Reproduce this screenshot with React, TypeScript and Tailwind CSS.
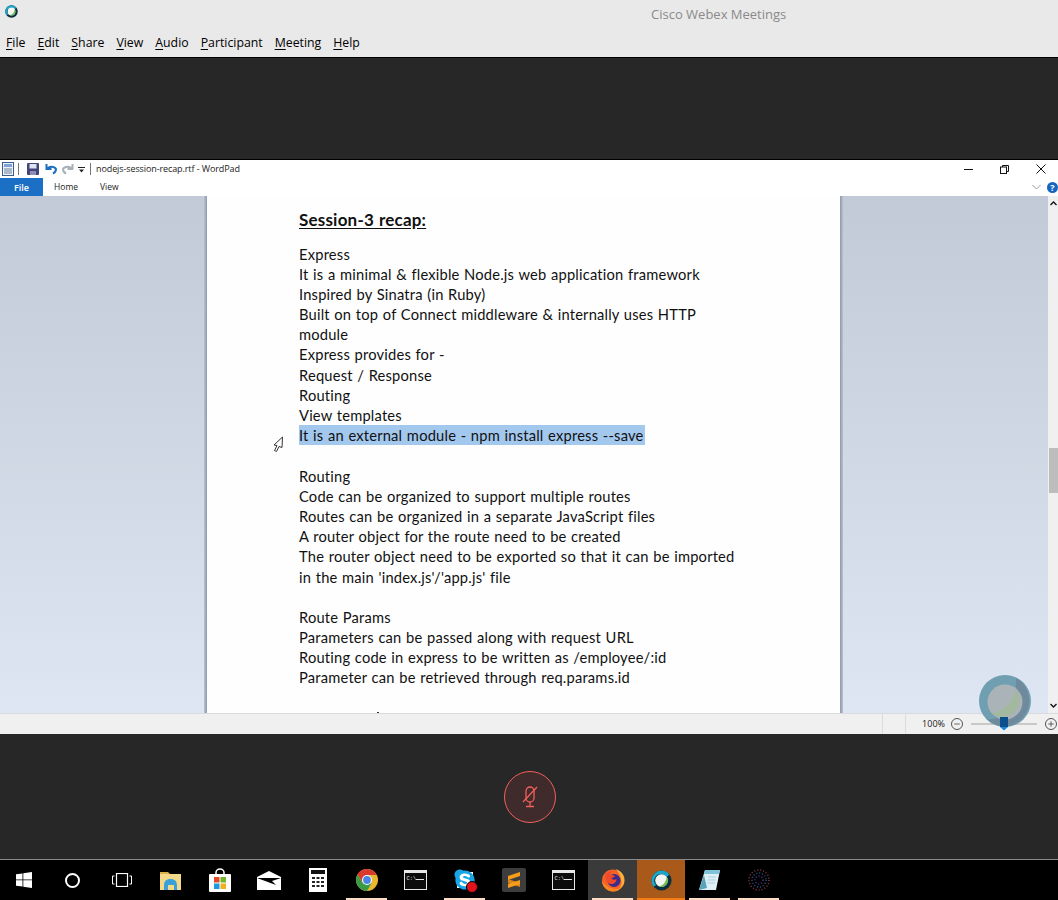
import { Minus, Plus } from "lucide-react";
import { FaSkype } from "react-icons/fa";
import { type ReactNode } from "react";

const menus = ["File", "Edit", "Share", "View", "Audio", "Participant", "Meeting", "Help"];

const docLines = [
  "Express",
  "It is a minimal & flexible Node.js web application framework",
  "Inspired by Sinatra (in Ruby)",
  "Built on top of Connect middleware & internally uses HTTP",
  "module",
  "Express provides for -",
  "Request / Response",
  "Routing",
  "View templates",
  "#It is an external module - npm install express --save",
  "",
  "Routing",
  "Code can be organized to support multiple routes",
  "Routes can be organized in a separate JavaScript files",
  "A router object for the route need to be created",
  "The router object need to be exported so that it can be imported",
  "in the main 'index.js'/'app.js' file",
  "",
  "Route Params",
  "Parameters can be passed along with request URL",
  "Routing code in express to be written as /employee/:id",
  "Parameter can be retrieved through req.params.id",
];

function WebexLogo({ size }: { size: number }) {
  return (
    <svg width={size} height={size} viewBox="0 0 24 24">
      <circle cx="12" cy="12" r="11.5" fill="#0b2f3c" />
      <path d="M12 .5A11.5 11.5 0 0 0 .5 12c0 3 1 5 2.5 7l3-2a7 7 0 0 1 6-12 7 7 0 0 1 6 3l3-3A11.5 11.5 0 0 0 12 .5z" fill="#19a6c9" />
      <circle cx="12" cy="12" r="7.2" fill="#f4f6f4" />
      <path d="M18 8a7.2 7.2 0 0 1-9 10.5C14 18 17 14 18 8z" fill="#6fbf4a" />
    </svg>
  );
}

function CmdIcon() {
  return (
    <svg width="23" height="20" viewBox="0 0 23 20">
      <rect x="0.5" y="0.5" width="22" height="19" fill="#0c0c0c" stroke="#e8e8e8" />
      <rect x="0" y="0" width="23" height="3" fill="#e8e8e8" />
      <text x="2.5" y="10" fontSize="5.5" fontFamily="Liberation Mono, monospace" fill="#e8e8e8">
        C:\
      </text>
      <rect x="12" y="9" width="8" height="1" fill="#e8e8e8" />
    </svg>
  );
}

function ChromeIcon() {
  return (
    <svg width="22" height="22" viewBox="0 0 22 22">
      <circle cx="11" cy="11" r="11" fill="#e8b92e" />
      <path d="M11 0a11 11 0 0 0-9.5 5.5L6 13l5-7h9.5A11 11 0 0 0 11 0z" fill="#d9392f" />
      <path d="M1.5 5.5A11 11 0 0 0 11 22l4.5-7.8L6 13z" fill="#3a9a48" />
      <circle cx="11" cy="11" r="5" fill="#fff" />
      <circle cx="11" cy="11" r="3.9" fill="#4a84e8" />
    </svg>
  );
}

function FirefoxIcon() {
  return (
    <svg width="24" height="24" viewBox="0 0 24 24">
      <circle cx="12" cy="12.5" r="11" fill="#f2622a" />
      <path d="M15 1c6 2.5 9 7 8.5 12-.5 5-4 8.500-8.500 9.500 4-2 6-5 5.500-9C20 9 18 5 15 1z" fill="#fbb03b" />
      <circle cx="13" cy="12.500" r="6.500" fill="#3c2a8c" />
      <path d="M4 7c2-3 5-4 8-4-2 1-3 2-3 4 2-.5 4 0 5 1.500-1 1-3 1-3.500 2 1 1.500 3.500 1.500 5 .5 0 3-2.500 5.500-6 5-3-.5-5-3-5-5.500C4 9.500 4 8 4 7z" fill="#ef4b2b" />
      <path d="M1 13c.5 6 5.500 10.500 11 10.500 4 0 7-2 9-5-3 2.500-7 3-10.500 1.500C6 18.500 3 16 1 13z" fill="#f7881f" />
    </svg>
  );
}

function SkypeIcon() {
  return (
    <div className="relative flex h-[24px] w-[24px] items-center justify-center">
      <span className="absolute h-4 w-4 bg-white" />
      <FaSkype size={24} color="#18a6e4" className="relative" />
      <span className="absolute left-[13px] top-[13px] h-3 w-3 rounded-full border border-black bg-[#e3121b]" />
    </div>
  );
}

function TaskIcon({
  children,
  running,
  className,
}: {
  children: ReactNode;
  running?: boolean;
  className?: string;
}) {
  return (
    <div className={`relative flex h-full shrink-0 items-center justify-center ${className ?? "w-[49px]"}`}>
      {children}
      {running && <span className="absolute bottom-0 left-1 right-1 h-0.5 bg-[#ffdcc4]" />}
    </div>
  );
}

function MuteIcon() {
  return (
    <svg width="16" height="22" viewBox="0 0 16 22" fill="none" stroke="#f0605a" strokeWidth="1.300">
      <rect x="4" y="1" width="8" height="15" rx="4" />
      <path d="M8 16v4M4 20.500h8M1 16 15 1" />
    </svg>
  );
}

export default function App() {
  return (
    <div className="relative flex h-[900px] w-[1058px] flex-col overflow-hidden bg-[#272727] [font-family:'Open_Sans',sans-serif]">
      <div className="h-[57px] shrink-0 bg-[#e9e9e9]">
        <div className="relative flex h-[32px] items-start pl-[5px] pt-[5px]">
          <WebexLogo size={13} />
          <span className="absolute left-[651px] top-[5px] text-[13px] leading-[18px] text-[#8a8a8a]">Cisco Webex Meetings</span>
        </div>
        <div className="flex h-[25px] items-start gap-[12px] pl-[6px] pt-[2px] text-[12.3px] leading-[18px] text-black">
          {menus.map((m) => (
            <span key={m}>
              <span className="underline underline-offset-2">{m[0]}</span>
              {m.slice(1)}
            </span>
          ))}
        </div>
      </div>
      <div className="h-[103px] shrink-0 border-y border-black bg-[#272727]" />

      <div className="flex h-[574px] shrink-0 flex-col bg-white">
        <div className="flex h-[18px] shrink-0 items-center pl-[2px] text-[9px] tracking-[-0.1px] text-[#222]">
          <svg width="12" height="14" viewBox="0 0 12 14">
            <rect x="0.500" y="0.500" width="11" height="13" fill="#eef3fa" stroke="#3c5a8a" />
            <rect x="2" y="2" width="8" height="3" fill="#7ea3d4" />
            <path d="M2 7h8M2 9h8M2 11h8" stroke="#6b7f9c" />
          </svg>
          <span className="ml-[4px] mr-[8px] h-3 w-px bg-[#777]" />
          <svg width="12" height="12" viewBox="0 0 12 12">
            <rect x="0" y="0" width="12" height="12" rx="1" fill="#44447a" />
            <rect x="2.500" y="1" width="7" height="4.500" fill="#dfe3ee" />
            <rect x="3" y="8" width="6" height="4" fill="#8e8eb5" />
          </svg>
          <svg className="ml-[6px]" width="13" height="12" viewBox="0 0 13 12" fill="none" stroke="#1f6fc0" strokeWidth="2">
            <path d="M2 6a5 4 0 0 1 9 0c0 2-1 3.500-3 4.500M1.500 1v5h5" />
          </svg>
          <svg className="ml-[3px]" width="13" height="12" viewBox="0 0 13 12" fill="none" stroke="#a9b0ba" strokeWidth="2">
            <path d="M11 6a5 4 0 0 0-9 0c0 2 1 3.500 3 4.500M11.500 1v5h-5" />
          </svg>
          <svg className="ml-[4px]" width="7" height="7" viewBox="0 0 7 7">
            <path d="M0 1h7v1H0zM1 3.500h5L3.500 6.500z" fill="#222" />
          </svg>
          <span className="ml-[5px] h-3 w-px bg-[#777]" />
          <span className="ml-[5px]">nodejs-session-recap.rtf - WordPad</span>
          <div className="ml-auto flex items-center">
            <svg width="9" height="9" viewBox="0 0 9 9" className="mr-[27px]">
              <path d="M0 4.500h9" stroke="#111" />
            </svg>
            <svg width="9" height="9" viewBox="0 0 9 9" fill="none" stroke="#111" className="mr-[27px]">
              <rect x="0.500" y="2" width="6" height="6.500" fill="#fff" />
              <path d="M2.500 2V.500h6V6.500H6.500" />
            </svg>
            <svg width="10" height="10" viewBox="0 0 10 10" stroke="#111" className="mr-[12px]">
              <path d="M.5.500l9 9M9.500.500l-9 9" />
            </svg>
          </div>
        </div>
        <div className="flex h-[18px] shrink-0 items-center text-[8.5px] leading-none text-[#222]">
          <div className="flex h-full w-[43px] items-center justify-center bg-[#1b6fc4] text-[9px] font-semibold text-white">File</div>
          <span className="ml-[11px]">Home</span>
          <span className="ml-[22px]">View</span>
          <svg className="ml-auto mr-[6px]" width="9" height="6" viewBox="0 0 9 6" fill="none" stroke="#9a9a9a">
            <path d="M.5 1l4 4 4-4" />
          </svg>
          <div className="flex h-[11px] w-[11px] items-center justify-center rounded-full bg-[#1565c0] text-[9px] font-bold text-white">?</div>
        </div>

        <div className="relative flex min-h-0 flex-1">
          <div className="w-[204px] shrink-0 bg-gradient-to-b from-[#c3cad7] to-[#dde6f2]" />
          <div className="w-[3px] shrink-0 bg-gradient-to-r from-[#b9c1d1] to-[#8f98ac]" />
          <div className="w-[633px] shrink-0 overflow-hidden bg-[#fefefe] pl-[92px] pt-[13.5px] text-[14.7px] leading-[20.2px] tracking-[0.2px] text-[#111] [font-family:Lato,sans-serif] [word-spacing:0.6px]">
            <div className="mb-[14px] text-[17px] font-bold leading-[20px] underline underline-offset-2">Session-3 recap:</div>
            {docLines.map((line, i) =>
              line.startsWith("#") ? (
                <div key={i} className="h-[20.2px] w-fit bg-[#a3c8ee] pr-px">{line.slice(1)}</div>
              ) : (
                <div key={i} className="h-[20.2px] whitespace-pre">{line}</div>
              ),
            )}
            <div className="ml-[78px] mt-[24px] h-px w-[2px] bg-[#333]" />
          </div>
          <div className="w-[3px] shrink-0 bg-gradient-to-r from-[#8f98ac] to-[#b9c1d1]" />
          <div className="flex-1 bg-gradient-to-b from-[#c3cad7] to-[#dde6f2]" />
          <div className="flex w-[10px] shrink-0 flex-col items-center justify-between bg-[#f0f0f0]">
            <svg width="7" height="5" viewBox="0 0 7 5" fill="none" stroke="#111" strokeWidth="1.300" className="mt-[5px]">
              <path d="M.5 4l3-3 3 3" />
            </svg>
            <svg width="7" height="5" viewBox="0 0 7 5" fill="none" stroke="#111" strokeWidth="1.300" className="mb-[5px]">
              <path d="M.5 1l3 3 3-3" />
            </svg>
          </div>
          <div className="absolute right-0 top-[252px] h-[45px] w-[9px] bg-[#bdbdbd]" />
          <svg className="absolute left-[272px] top-[240px]" width="12" height="17" viewBox="0 0 12 17" fill="#fff" stroke="#333">
            <path d="M10.500 1 2 9l3 .5-2.500 5 2 1 2.500-5 3 1z" />
          </svg>
        </div>

        <div className="relative flex h-[21px] shrink-0 items-center justify-end border-t border-[#dadada] bg-[#f0f0f0] text-[9px] text-[#222]">
          <span className="absolute right-[175px] top-0 h-full w-px bg-[#dcdcdc]" />
          <span className="absolute right-[152px] top-0 h-full w-px bg-[#dcdcdc]" />
          <span className="mr-[6px]">100%</span>
          <div className="flex h-3 w-3 items-center justify-center rounded-full border border-[#555]">
            <Minus size={8} strokeWidth={2} />
          </div>
          <div className="relative mx-[8px] h-[2px] w-[66px] bg-[#c9c9c9]" />
          <div className="mr-[1px] flex h-3 w-3 items-center justify-center rounded-full border border-[#555]">
            <Plus size={8} strokeWidth={2} />
          </div>
        </div>
      </div>

      <div className="flex h-[125px] shrink-0 items-center justify-center bg-[#272727] pl-[2px]">
        <div className="flex h-[52px] w-[52px] items-center justify-center rounded-full border-[1.500px] border-[#f0605a] bg-[#3f2b2b]">
          <MuteIcon />
        </div>
      </div>

      <div className="flex h-[41px] shrink-0 items-stretch border-t border-[#8a8a8a] bg-black">
        <TaskIcon className="w-[48px]">
          <svg width="16" height="16" viewBox="0 0 16 16" fill="#fff">
            <path d="M0 2.300 6.500 1.400V7.500H0zM7.300 1.300 16 0V7.500H7.300zM0 8.300H6.500V14.500L0 13.700zM7.300 8.300H16V16L7.300 14.700z" />
          </svg>
        </TaskIcon>
        <TaskIcon>
          <div className="h-[15px] w-[15px] rounded-full border-2 border-white" />
        </TaskIcon>
        <TaskIcon>
          <svg width="20" height="14" viewBox="0 0 20 14" fill="none" stroke="#fff">
            <rect x="4.500" y="0.500" width="11" height="13" strokeWidth="1.200" />
            <path d="M2.500 3H.5v8h2M17.500 3h2v8h-2" />
          </svg>
        </TaskIcon>
        <TaskIcon>
          <svg width="22" height="19" viewBox="0 0 22 19">
            <path d="M0 1h8l2 2h11v3H0z" fill="#d9b44a" />
            <rect x="0" y="3" width="21" height="16" fill="#f5d98a" />
            <path d="M4 15c0-5 2-7 6.500-7S17 10 17 15v4h-3v-5H8v5H4z" fill="#3aa0d8" />
          </svg>
        </TaskIcon>
        <TaskIcon>
          <svg width="24" height="24" viewBox="0 0 24 24">
            <path d="M8 8V4.500a4 3.500 0 0 1 8 0V8" fill="none" stroke="#fff" strokeWidth="1.500" />
            <rect x="1" y="6" width="22" height="18" rx="1" fill="#fff" />
            <rect x="6" y="9" width="5.500" height="5.500" fill="#e2492b" />
            <rect x="12.500" y="9" width="5.500" height="5.500" fill="#73b52a" />
            <rect x="6" y="15.500" width="5.500" height="5.500" fill="#1f9ae0" />
            <rect x="12.500" y="15.500" width="5.500" height="5.500" fill="#f2b01e" />
          </svg>
        </TaskIcon>
        <TaskIcon>
          <svg width="24" height="19" viewBox="0 0 24 19" fill="#fff">
            <path d="M0 6 12 0l12 6v13H0z" />
            <path d="M0 7h24l-9 3 4 4z" fill="#000" />
          </svg>
        </TaskIcon>
        <TaskIcon>
          <svg width="18" height="24" viewBox="0 0 18 24">
            <rect width="18" height="24" fill="#fff" />
            <rect x="2" y="2" width="14" height="4" fill="#111" />
            <path d="M3 9h3v2H3zM7.500 9h3v2h-3zM12 9h3v2h-3zM3 13h3v2H3zM7.500 13h3v2h-3zM12 13h3v2h-3zM3 17h3v2H3zM7.500 17h3v2h-3zM12 17h3v2h-3z" fill="#222" />
          </svg>
        </TaskIcon>
        <TaskIcon running>
          <ChromeIcon />
        </TaskIcon>
        <TaskIcon>
          <CmdIcon />
        </TaskIcon>
        <TaskIcon running>
          <SkypeIcon />
        </TaskIcon>
        <TaskIcon>
          <div className="flex h-[24px] w-[24px] items-center justify-center rounded-[2px] bg-[#3d3d3d]">
            <svg width="14" height="16" viewBox="0 0 14 16">
              <path d="M1 7l12 4v4L1 11z" fill="#d9841a" />
              <path d="M13 0v4L1 8V4zM13 8v4L1 16v-4z" fill="#f89c1c" />
            </svg>
          </div>
        </TaskIcon>
        <TaskIcon className="w-[50px]">
          <CmdIcon />
        </TaskIcon>
        <TaskIcon running className="w-[49px] bg-[#3a3a3a]">
          <FirefoxIcon />
        </TaskIcon>
        <div className="relative flex h-full w-[48px] shrink-0 items-center justify-center bg-[#a9591a]">
          <WebexLogo size={21} />
          <span className="absolute bottom-0 left-0 right-0 h-0.5 bg-[#f57c10]" />
        </div>
        <TaskIcon running>
          <svg width="23" height="23" viewBox="0 0 23 23">
            <path d="M7 1h15l-4 20H1z" fill="#dff1f6" />
            <path d="M7 1h15l-1 4H6z" fill="#7fc4d8" />
            <path d="M1 21l5-15 3 13z" fill="#5aa3bd" />
            <path d="M10 8h8M9.500 11h8M9 14h8" stroke="#a9cfdc" />
          </svg>
        </TaskIcon>
        <TaskIcon running>
          <svg width="22" height="22" viewBox="0 0 22 22" fill="none" strokeWidth="1.500" strokeDasharray="1 2" opacity="0.7">
            <circle cx="11" cy="11" r="10" stroke="#c04a6a" />
            <circle cx="11" cy="11" r="7" stroke="#3a78b5" />
            <circle cx="11" cy="11" r="4" stroke="#7a4ad0" />
          </svg>
        </TaskIcon>
      </div>

      <svg className="pointer-events-none absolute left-[979px] top-[675px]" width="52" height="56" viewBox="0 0 52 56">
        <circle cx="26" cy="26" r="26" fill="#6f9fb0" />
        <path d="M37 3a26 26 0 0 1-7 48 26 26 0 0 1-22-7C22 46 38 34 37 3z" fill="#6f8a9c" />
        <circle cx="26" cy="27" r="17.500" fill="#aab4b8" />
        <path d="M37 13.500a17.500 17.500 0 0 1-24 25C22 36 34 30 37 13.500z" fill="#a2b9a0" />
        <rect x="21" y="42" width="8" height="10" fill="#0d4f8c" />
        <path d="M21 52h8l-4 3.500z" fill="#1f86d8" />
      </svg>
    </div>
  );
}
